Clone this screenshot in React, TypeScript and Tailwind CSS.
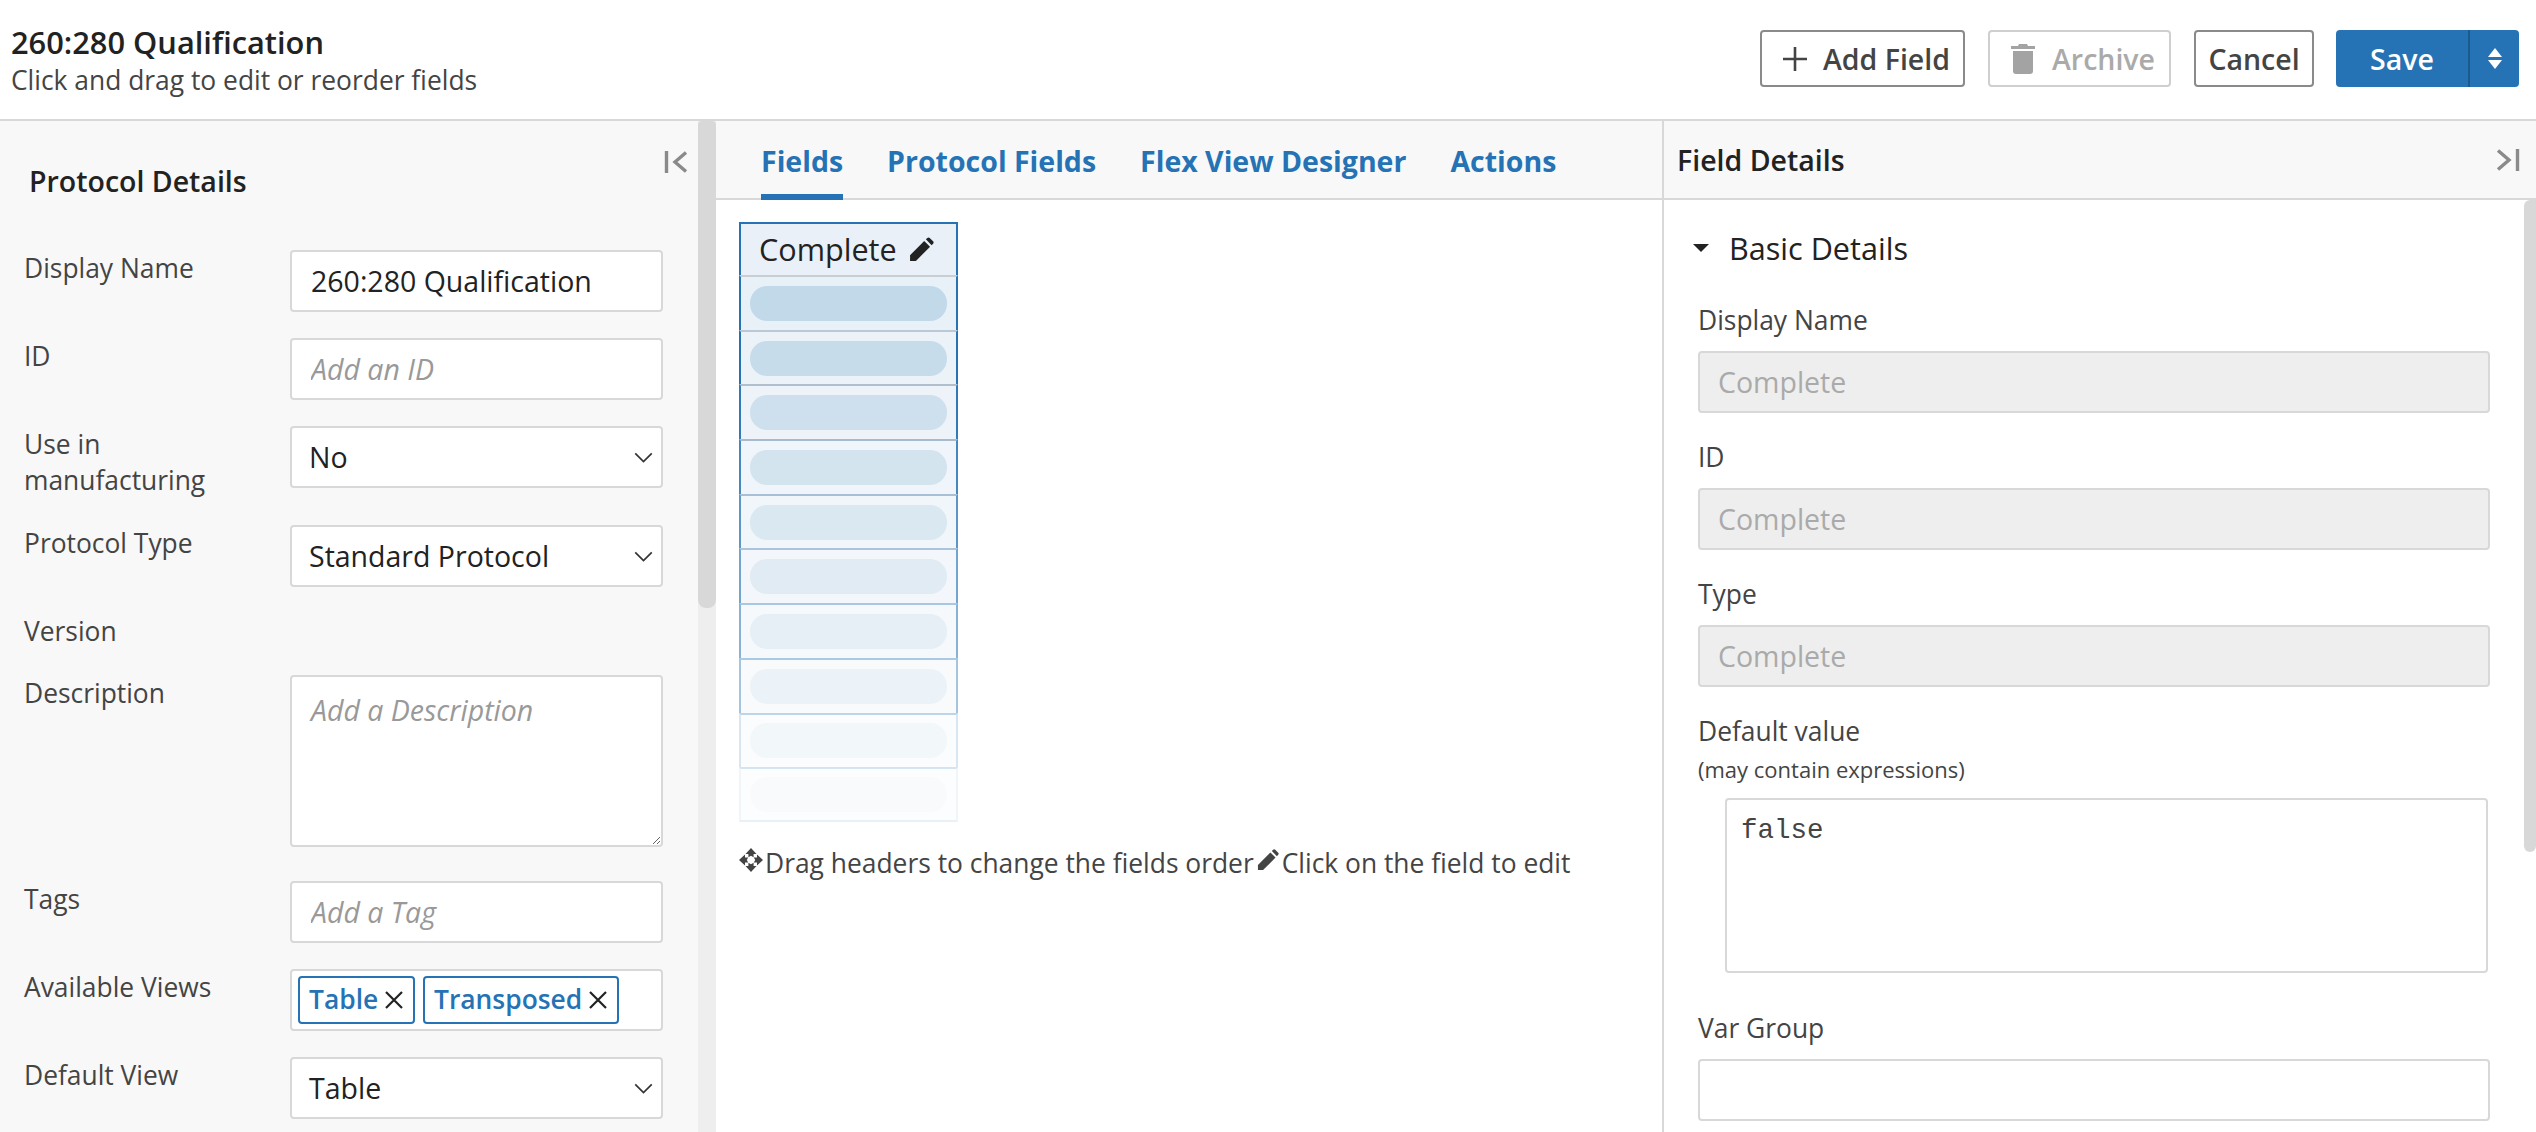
import React from "react";

const Pencil = ({ className }: { className: string }) => (
  <svg viewBox="0 0 24 24" className={className} fill="currentColor">
    <path d="M1 23v-5.6L14.6 3.8l5.6 5.6L6.6 23z" />
    <path d="M16.2 2.2 17.6.9a1.7 1.7 0 0 1 2.3 0l3.2 3.2a1.7 1.7 0 0 1 0 2.3l-1.4 1.4z" />
  </svg>
);

const Move = ({ className }: { className: string }) => (
  <svg viewBox="0 0 24 24" className={className} fill="currentColor">
    <path d="M12 0l5.5 6H14.6v3.2L12 7.8 9.4 9.2V6H6.5z" />
    <path d="M12 24l5.5-6H14.6v-3.2L12 16.2l-2.6-1.4V18H6.5z" />
    <path d="M0 12l6-5.5V9.4h3.2L7.8 12l1.4 2.6H6v2.9z" />
    <path d="M24 12l-6-5.5V9.4h-3.2L16.2 12l-1.4 2.6H18v2.9z" />
  </svg>
);

const Chevron = () => (
  <svg viewBox="0 0 20 12" className="h-[11px] w-[19px] shrink-0" fill="none" stroke="#333" strokeWidth="1.8">
    <path d="M1 1.5l9 9 9-9" />
  </svg>
);

const X = () => (
  <svg viewBox="0 0 18 18" className="h-[18px] w-[18px] shrink-0" fill="none" stroke="#222" strokeWidth="2.2">
    <path d="M1 1l16 16M17 1L1 17" />
  </svg>
);

const Collapse = ({ right }: { right?: boolean }) => (
  <svg viewBox="0 0 24 24" className={right ? "h-[24px] w-[24px] rotate-180" : "h-[24px] w-[24px]"} fill="none" stroke="#8a8a8a" strokeWidth="3.4">
    <path d="M2.5 1v22" />
    <path d="M22 2.5L11 12l11 9.5" />
  </svg>
);

const inputCls =
  "w-full h-[62px] rounded-[4px] border-2 border-[#d8d8d8] bg-white px-[19px] text-[28.5px] text-[#222] outline-none placeholder:italic placeholder:text-[#999]";

function Row({ label, children, mb = "mb-[26px]" }: { label: string; children?: React.ReactNode; mb?: string }) {
  return (
    <div className={`flex items-start ${mb}`}>
      <div className="w-[266px] shrink-0 pr-[24px] text-[26.4px] leading-[36px] text-[#444]">{label}</div>
      <div className="w-[373px] shrink-0">{children}</div>
    </div>
  );
}

const Select = ({ value }: { value: string }) => (
  <div className="flex h-[62px] w-full items-center justify-between rounded-[4px] border-2 border-[#d8d8d8] bg-white pl-[17px] pr-[8px] text-[28.5px] text-[#222]">
    <span>{value}</span>
    <Chevron />
  </div>
);

const Chip = ({ text, w }: { text: string; w: string }) => (
  <div className={`flex h-[48px] items-center justify-between rounded-[4px] border-2 border-[#2573b5] bg-white pl-[9px] pr-[10px] text-[26.4px] font-semibold text-[#2573b5] ${w}`}>
    <span>{text}</span>
    <X />
  </div>
);

const Btn = ({ className, children }: { className: string; children: React.ReactNode }) => (
  <button className={`flex h-[57px] items-center rounded-[4px] border-2 bg-white pt-[1px] text-[28.5px] font-semibold ${className}`}>{children}</button>
);

function Detail({ label, value }: { label: string; value: string }) {
  return (
    <div className="mb-[26px]">
      <div className="mb-[13px] text-[26.4px] leading-[36px] text-[#444]">{label}</div>
      <div className="flex h-[62px] items-center rounded-[4px] border-2 border-[#d8d8d8] bg-[#eeeeee] px-[18px] text-[28.5px] text-[#aaa]">{value}</div>
    </div>
  );
}

const rows = [
  { o: 1, side: 1, sep: "#c9ced3" },
  { o: 0.9, side: 1, sep: "#bcc8d4" },
  { o: 0.8, side: 0.95, sep: "#b0bfcd" },
  { o: 0.7, side: 0.85, sep: "#a8bbcd" },
  { o: 0.6, side: 0.75, sep: "#a8c0d6" },
  { o: 0.5, side: 0.65, sep: "#a9c4dc" },
  { o: 0.4, side: 0.55, sep: "#a9c7e0" },
  { o: 0.3, side: 0.42, sep: "#a9c9e4" },
  { o: 0.2, side: 0.18, sep: "#bcd5e9" },
  { o: 0.1, side: 0.07, sep: "#d4e4f0" },
];

export default function App() {
  return (
    <div className="flex h-screen w-full flex-col overflow-hidden bg-white font-['Open_Sans',sans-serif]">
      <header className="flex h-[121px] shrink-0 items-start justify-between border-b-2 border-[#d8d8d8] pl-[11px] pr-[17px]">
        <div className="pt-[22px]">
          <div className="text-[30.8px] font-semibold leading-[40px] text-[#222]">260:280 Qualification</div>
          <div className="mt-[-1px] text-[26.4px] leading-[38px] text-[#444]">Click and drag to edit or reorder fields</div>
        </div>
        <div className="flex items-center pt-[30px]">
          <Btn className="w-[205px] border-[#8a8a8a] pl-[21px] text-[#444]">
            <svg viewBox="0 0 24 24" className="mr-[16px] h-[24px] w-[24px]" fill="none" stroke="#444" strokeWidth="2.6">
              <path d="M12 0v24M0 12h24" />
            </svg>
            Add Field
          </Btn>
          <Btn className="ml-[23px] w-[183px] border-[#cfcfcf] pl-[21px] text-[#aaa]">
            <svg viewBox="0 0 24 30" className="mr-[17px] h-[30px] w-[24px]" fill="#a3a3a3">
              <path d="M8 0h8l1 2h7v3H0V2h7z" />
              <path d="M2 7h20v20a3 3 0 0 1-3 3H5a3 3 0 0 1-3-3z" />
            </svg>
            Archive
          </Btn>
          <Btn className="ml-[23px] w-[120px] justify-center border-[#8a8a8a] text-[#444]">Cancel</Btn>
          <div className="ml-[22px] flex h-[57px] w-[183px] overflow-hidden rounded-[4px] bg-[#2573b5] text-[28.5px] font-semibold text-white">
            <div className="flex w-[134px] items-center justify-center border-r-2 border-[#1a5a8f] pt-[1px]">Save</div>
            <div className="flex flex-1 flex-col items-center justify-center gap-[3px]">
              <svg viewBox="0 0 14 9" className="h-[9px] w-[14px]" fill="white"><path d="M7 0l7 9H0z" /></svg>
              <svg viewBox="0 0 14 9" className="h-[9px] w-[14px]" fill="white"><path d="M7 9l7-9H0z" /></svg>
            </div>
          </div>
        </div>
      </header>

      <main className="flex min-h-0 flex-1">
        {/* Left panel */}
        <aside className="flex w-[716px] shrink-0 bg-[#f8f8f8]">
          <div className="relative h-full w-[698px] shrink-0 overflow-hidden pl-[24px]">
            <button className="absolute left-[664px] top-[29px]"><Collapse /></button>
            <h2 className="ml-[5px] pt-[41px] text-[28.5px] font-semibold leading-[38px] text-[#222]">Protocol Details</h2>
            <div className="mt-[50px]">
              <Row label="Display Name"><input readOnly value="260:280 Qualification" className={inputCls} /></Row>
              <Row label="ID"><input readOnly placeholder="Add an ID" className={inputCls} /></Row>
              <Row label="Use in manufacturing" mb="mb-[27px]"><Select value="No" /></Row>
              <Row label="Protocol Type"><Select value="Standard Protocol" /></Row>
              <Row label="Version" />
              <Row label="Description" mb="mb-[34px]">
                <textarea readOnly placeholder="Add a Description" className={`${inputCls} block !h-[172px] resize py-[12px]`} />
              </Row>
              <Row label="Tags"><input readOnly placeholder="Add a Tag" className={inputCls} /></Row>
              <Row label="Available Views">
                <div className="flex h-[62px] items-center gap-[8px] rounded-[4px] border-2 border-[#d8d8d8] bg-white pl-[6px]">
                  <Chip text="Table" w="w-[117px]" />
                  <Chip text="Transposed" w="w-[196px]" />
                </div>
              </Row>
              <Row label="Default View"><Select value="Table" /></Row>
            </div>
          </div>
          <div className="h-full w-[18px] shrink-0 bg-[#eeeeee]">
            <div className="h-[487px] w-full rounded-b-[8px] rounded-t-[4px] bg-[#d8d8d8]" />
          </div>
        </aside>

        {/* Center panel */}
        <section className="flex w-[946px] shrink-0 flex-col">
          <nav className="flex h-[79px] shrink-0 gap-[44px] border-b-2 border-[#d8d8d8] bg-[#f8f8f8] pl-[45px] text-[28.5px] font-bold text-[#2573b5]">
            <div className="flex h-[79px] items-center border-b-[6px] border-[#2573b5] pt-[8px]">Fields</div>
            <div className="flex h-[79px] items-center border-b-[6px] border-transparent pt-[8px]">Protocol Fields</div>
            <div className="flex h-[79px] items-center border-b-[6px] border-transparent pt-[8px]">Flex View Designer</div>
            <div className="flex h-[79px] items-center border-b-[6px] border-transparent pt-[8px]">Actions</div>
          </nav>
          <div className="pl-[23px] pt-[22px]">
            <div className="w-[219px]">
              <div className="flex h-[53px] items-center border-x-2 border-t-2 border-[#2573b5] bg-[#e9f0f7] pl-[18px] text-[30.6px] leading-none text-[#222]">
                Complete
                <Pencil className="ml-[12px] h-[25px] w-[25px]" />
              </div>
              {rows.map((r, i) => (
                <div
                  key={r.o}
                  style={{
                    borderTopColor: r.sep,
                    borderLeftColor: `rgba(37,115,181,${r.side})`,
                    borderRightColor: `rgba(37,115,181,${r.side})`,
                    borderBottomColor: i === rows.length - 1 ? "#e9f0f6" : "transparent",
                  }}
                  className={`flex h-[54.7px] border-x-2 border-t-2 ${i === rows.length - 1 ? "border-b-2" : ""}`}
                >
                  <div style={{ opacity: r.o }} className="flex flex-1 items-center bg-[#e9f1f8] px-[9px]">
                    <div className="h-[35px] w-full rounded-[17px] bg-[#c2d9e9]" />
                  </div>
                </div>
              ))}
            </div>
            <div className="mt-[23px] flex h-[36px] items-center text-[26.4px] leading-[36px] text-[#444]">
              <Move className="mr-[2px] h-[24px] w-[24px] -translate-y-[3px]" />
              <span>Drag headers to change the fields order</span>
              <Pencil className="mx-[3px] h-[22px] w-[22px] -translate-y-[3px]" />
              <span>Click on the field to edit</span>
            </div>
          </div>
        </section>

        {/* Right panel */}
        <aside className="flex min-w-0 flex-1 flex-col border-l-2 border-[#d8d8d8]">
          <div className="flex h-[79px] shrink-0 items-center justify-between border-b-2 border-[#d8d8d8] bg-[#f8f8f8] pl-[13px] pr-[16px] pt-[1px] text-[28.5px] font-semibold text-[#222]">
            <span>Field Details</span>
            <Collapse right />
          </div>
          <div className="flex min-h-0 flex-1">
            <div className="w-[860px] shrink-0 overflow-hidden pl-[34px] pr-[34px]">
              <div className="box-content flex h-[36px] items-center pt-[30px]">
                <svg viewBox="0 0 16 8" className="ml-[-5px] h-[8px] w-[16px]" fill="#222"><path d="M0 0h16L8 8z" /></svg>
                <span className="ml-[20px] text-[30.6px] leading-[36px] text-[#222]">Basic Details</span>
              </div>
              <div className="mt-[36px]">
                <Detail label="Display Name" value="Complete" />
                <Detail label="ID" value="Complete" />
                <Detail label="Type" value="Complete" />
                <div className="text-[26.4px] leading-[36px] text-[#444]">Default value</div>
                <div className="mb-[14px] mt-[5px] text-[22px] leading-[30px] text-[#444]">(may contain expressions)</div>
                <textarea
                  readOnly
                  value="false"
                  className="ml-[27px] block h-[175px] w-[763px] resize-none rounded-[4px] border-2 border-[#d8d8d8] px-[14px] py-[13px] font-['Liberation_Mono',monospace] text-[27.5px] leading-[36px] text-[#444] outline-none"
                />
                <div className="mb-[13px] mt-[37px] text-[26.4px] leading-[36px] text-[#444]">Var Group</div>
                <input readOnly className={inputCls} />
              </div>
            </div>
            <div className="h-full w-[12px] shrink-0">
              <div className="h-[652px] w-full rounded-b-[8px] rounded-tl-[8px] bg-[#d8d8d8]" />
            </div>
          </div>
        </aside>
      </main>
    </div>
  );
}
